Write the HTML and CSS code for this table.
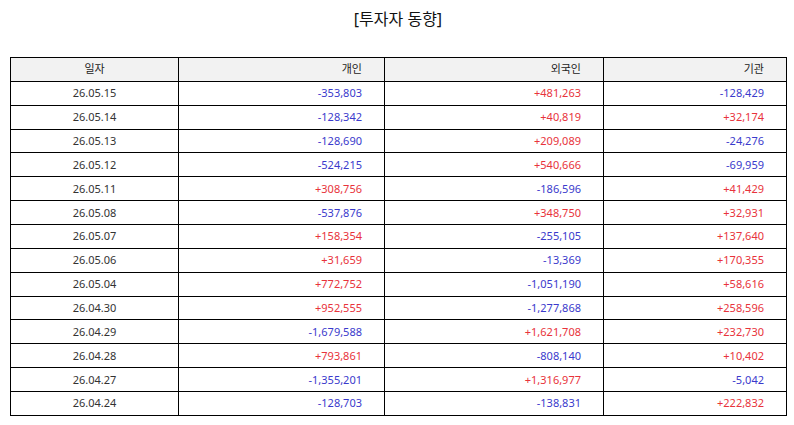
FILE: index.html
```html
<!DOCTYPE html>
<html lang="ko">
<head>
<meta charset="utf-8">
<title>투자자 동향</title>
<link rel="stylesheet" href="styles.css">
</head>
<body>
<div class="page">
  <h1 class="title">[투자자 동향]</h1>
  <table class="grid">
    <colgroup>
      <col class="c-date"><col class="c-ind"><col class="c-for"><col class="c-inst">
    </colgroup>
    <thead>
      <tr><th class="center">일자</th><th>개인</th><th>외국인</th><th>기관</th></tr>
    </thead>
    <tbody>
      <tr><td class="center">26.05.15</td><td class="dn">-353,803</td><td class="up">+481,263</td><td class="dn">-128,429</td></tr>
      <tr><td class="center">26.05.14</td><td class="dn">-128,342</td><td class="up">+40,819</td><td class="up">+32,174</td></tr>
      <tr><td class="center">26.05.13</td><td class="dn">-128,690</td><td class="up">+209,089</td><td class="dn">-24,276</td></tr>
      <tr><td class="center">26.05.12</td><td class="dn">-524,215</td><td class="up">+540,666</td><td class="dn">-69,959</td></tr>
      <tr><td class="center">26.05.11</td><td class="up">+308,756</td><td class="dn">-186,596</td><td class="up">+41,429</td></tr>
      <tr><td class="center">26.05.08</td><td class="dn">-537,876</td><td class="up">+348,750</td><td class="up">+32,931</td></tr>
      <tr><td class="center">26.05.07</td><td class="up">+158,354</td><td class="dn">-255,105</td><td class="up">+137,640</td></tr>
      <tr><td class="center">26.05.06</td><td class="up">+31,659</td><td class="dn">-13,369</td><td class="up">+170,355</td></tr>
      <tr><td class="center">26.05.04</td><td class="up">+772,752</td><td class="dn">-1,051,190</td><td class="up">+58,616</td></tr>
      <tr><td class="center">26.04.30</td><td class="up">+952,555</td><td class="dn">-1,277,868</td><td class="up">+258,596</td></tr>
      <tr><td class="center">26.04.29</td><td class="dn">-1,679,588</td><td class="up">+1,621,708</td><td class="up">+232,730</td></tr>
      <tr><td class="center">26.04.28</td><td class="up">+793,861</td><td class="dn">-808,140</td><td class="up">+10,402</td></tr>
      <tr><td class="center">26.04.27</td><td class="dn">-1,355,201</td><td class="up">+1,316,977</td><td class="dn">-5,042</td></tr>
      <tr><td class="center">26.04.24</td><td class="dn">-128,703</td><td class="dn">-138,831</td><td class="up">+222,832</td></tr>
    </tbody>
  </table>
</div>
</body>
</html>
```
FILE: styles.css
```css
html, body {
  margin: 0;
  padding: 0;
  background: #ffffff;
}

body {
  font-family: "Noto Sans", "Noto Sans CJK KR", sans-serif;
  color: #333333;
}

.page {
  padding: 0 8px 0 10px;
}

.title {
  margin: 0 0 25px 0;
  padding-top: 6px;
  font-size: 16px;
  line-height: 26px;
  font-weight: normal;
  text-align: center;
  color: #111111;
}

.grid {
  width: 776px;
  table-layout: fixed;
  border-collapse: collapse;
  border: 1px solid #000000;
  font-size: 11px;
}

.c-date { width: 168px; }
.c-ind { width: 206px; }
.c-for { width: 219px; }
.c-inst { width: 183px; }

.grid th,
.grid td {
  border: 1px solid #000000;
  height: 22.87px;
  padding: 0 22px 0 4px;
  text-align: right;
  line-height: 14px;
  font-weight: normal;
  white-space: nowrap;
}

.grid th {
  background: #f2f2f2;
  color: #222222;
}

.grid .center {
  text-align: center;
  padding: 0;
}

.up { color: #e8333b; }
.dn { color: #3a3acc; }
```
